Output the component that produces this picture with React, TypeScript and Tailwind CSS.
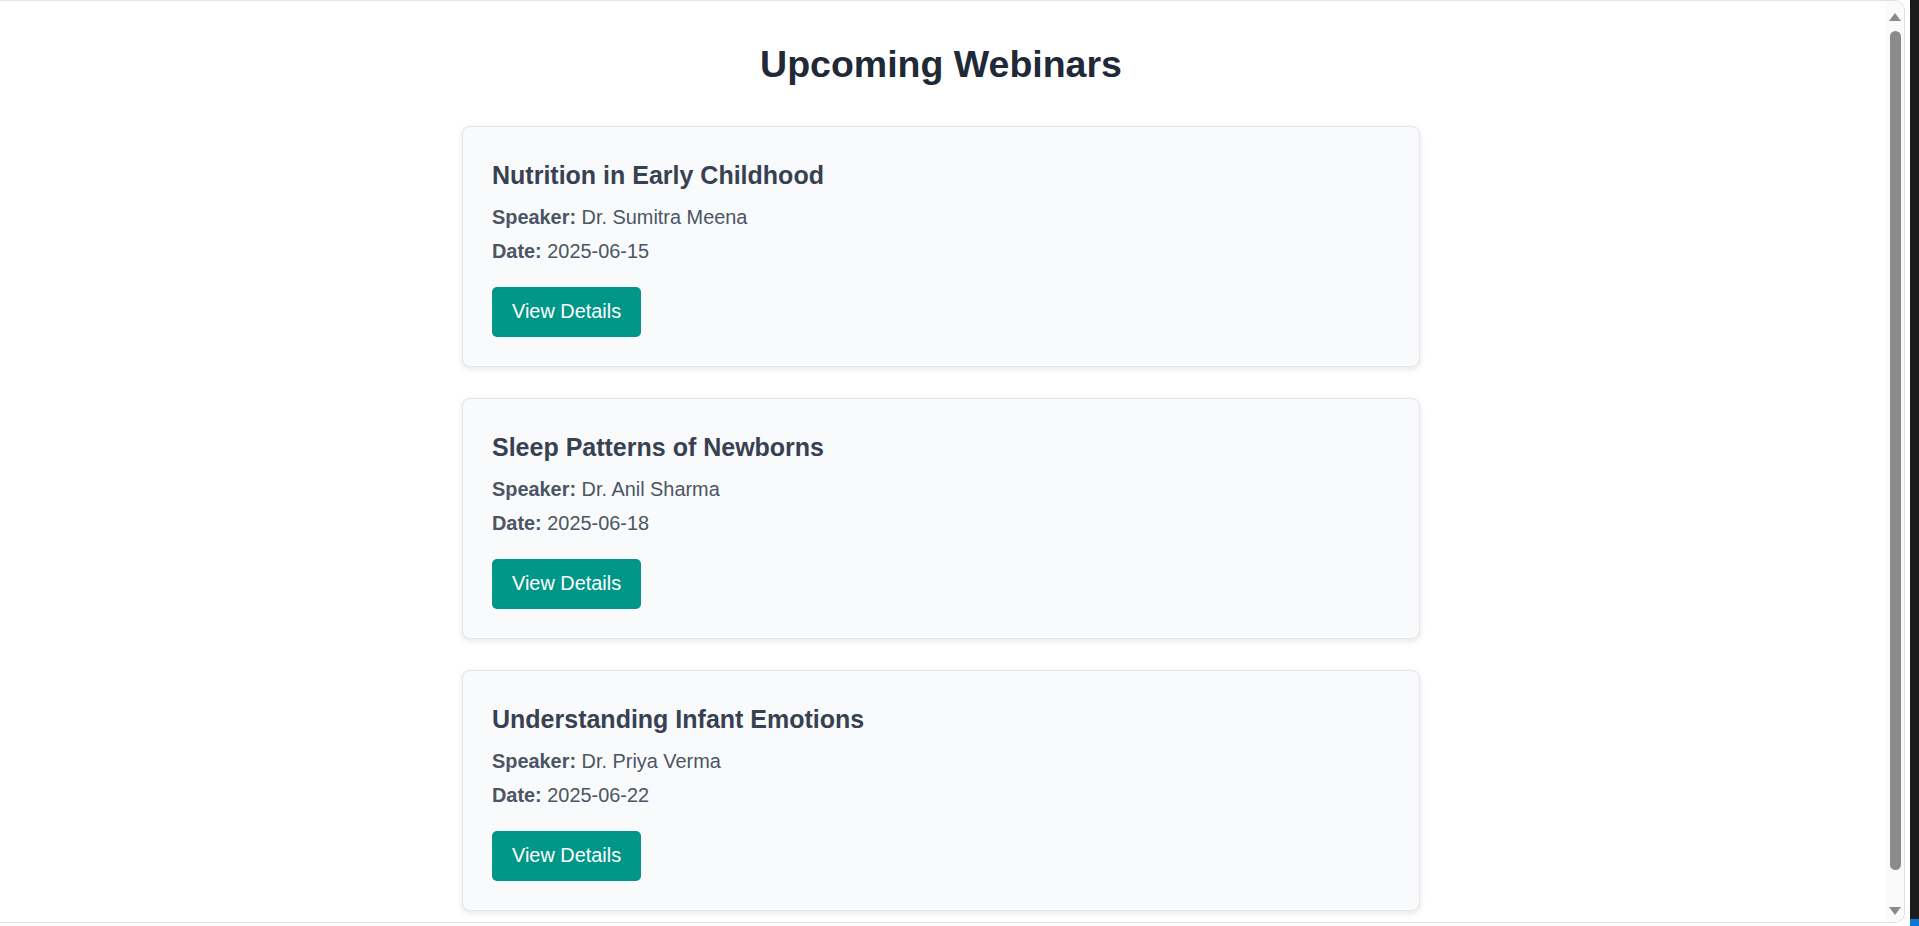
import React from "react";

interface Webinar {
  title: string;
  speaker: string;
  date: string;
}

const webinars: Webinar[] = [
  { title: "Nutrition in Early Childhood", speaker: "Dr. Sumitra Meena", date: "2025-06-15" },
  { title: "Sleep Patterns of Newborns", speaker: "Dr. Anil Sharma", date: "2025-06-18" },
  { title: "Understanding Infant Emotions", speaker: "Dr. Priya Verma", date: "2025-06-22" },
];

const WebinarCard = ({ webinar }: { webinar: Webinar }): React.ReactElement => {
  return (
    <div className="w-[958px] shrink-0 rounded-[8px] border border-[#e5e7eb] bg-[#f9fafb] px-[29px] pt-[33px] pb-[29px] shadow-[0_2px_6px_rgba(0,0,0,0.1)]">
      <h3 className="mb-[10px] text-[25px] font-bold leading-[30px] text-[#374151]">{webinar.title}</h3>
      <p className="text-[19.9px] leading-[34px] text-[#4b5563]">
        <span className="font-bold">Speaker:</span> {webinar.speaker}
      </p>
      <p className="text-[19.9px] leading-[35px] text-[#4b5563]">
        <span className="font-bold">Date:</span> {webinar.date}
      </p>
      <button className="mt-[18px] flex h-[50px] items-center rounded-[5px] bg-[#009688] px-[20px] text-[19.9px] text-white">
        View Details
      </button>
    </div>
  );
};

const Scrollbar = (): React.ReactElement => {
  return (
    <div className="flex w-[18px] shrink-0 flex-col items-center bg-[#fafafa]">
      <svg width="12" height="8" viewBox="0 0 12 8" className="mt-[12px]">
        <polygon points="6,0 12,8 0,8" fill="#8a8a8a" />
      </svg>
      <div className="mt-[10px] h-[839px] w-[11px] rounded-full bg-[#8b8b8b]" />
      <div className="flex-1" />
      <svg width="12" height="8" viewBox="0 0 12 8" className="mb-[7px]">
        <polygon points="0,0 12,0 6,8" fill="#8a8a8a" />
      </svg>
    </div>
  );
};

export default function App(): React.ReactElement {
  return (
    <div className="flex h-screen w-full overflow-hidden bg-white font-['Liberation_Sans',Arial,sans-serif]">
      <div className="flex h-[923px] flex-1 overflow-hidden rounded-r-[10px] border-y border-r border-[#e2e2e2] bg-white">
        <div className="flex flex-1 flex-col items-center overflow-hidden pr-[4px]">
          <h1 className="mt-[41px] text-[37.5px] font-bold leading-[44px] text-[#1f2937]">Upcoming Webinars</h1>
          <div className="mt-[40px] flex flex-col gap-[31px] pb-[40px]">
            {webinars.map((w) => (
              <WebinarCard key={w.title} webinar={w} />
            ))}
          </div>
        </div>
        <Scrollbar />
      </div>
      <div className="w-[5px] bg-white" />
      <div className="flex w-[9px] flex-col justify-end bg-[#1b1b1b]">
        <div className="h-[7px] bg-[#0b78d4]" />
      </div>
    </div>
  );
}
